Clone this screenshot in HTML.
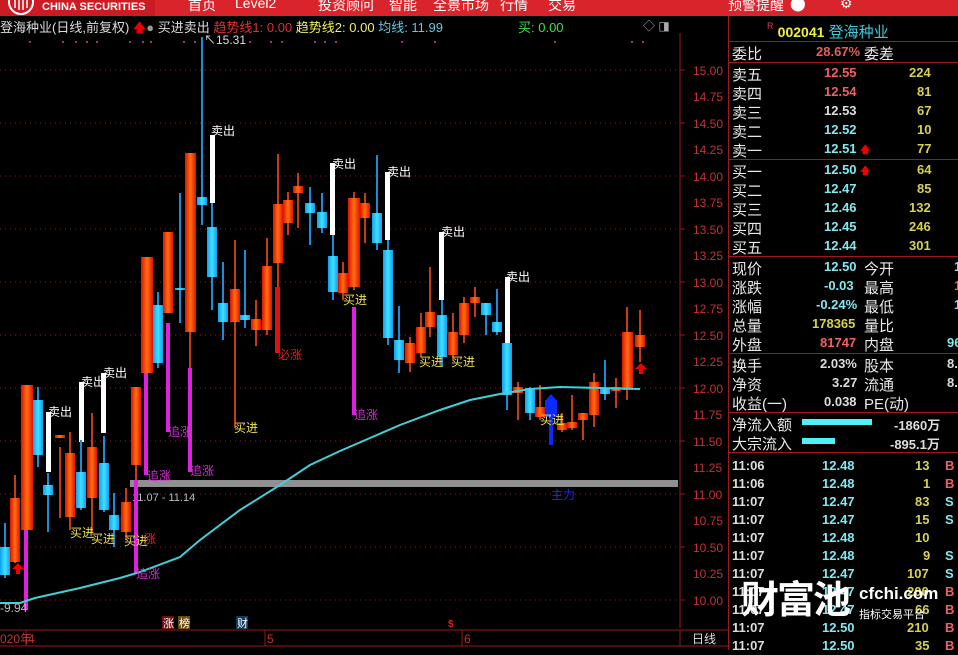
<!DOCTYPE html>
<html><head><meta charset="utf-8"><style>
*{margin:0;padding:0;box-sizing:border-box}
body{width:958px;height:650px;background:#000;overflow:hidden;position:relative;font-family:"Liberation Sans","Noto Sans CJK SC",sans-serif;color:#ddd}
.top{position:absolute;left:0;top:0;width:958px;height:16px;background:#d8242a;overflow:hidden}
.top .lg{position:absolute;left:0;top:0;width:155px;height:16px;background:#cc1b22}
.top span{position:absolute;top:-5px;color:#fff;font-size:14px}
.hd{position:absolute;top:17px;left:0;font-size:13px;white-space:nowrap}
.rp{position:absolute;left:728px;top:16px;width:230px;height:634px;border-left:1px solid #a01818}
.row{position:absolute;left:3px;width:230px;height:19px;font-size:15px;color:#e8e8e8;white-space:nowrap}
.row b{position:absolute;font-weight:bold;font-size:13px;top:1px}
.hl{position:absolute;left:0;width:230px;height:1px;background:#a01818}
.ar{color:#e00;font-size:10px}
</style></head><body>
<div class="top"><div class="lg"></div>
<svg style="position:absolute;left:8px;top:-6px" width="26" height="22"><circle cx="13" cy="8" r="12" fill="none" stroke="#fff" stroke-width="2"/><path d="M7 0V14M11 0V16M15 0V16M19 0V14" stroke="#fff" stroke-width="1.5"/></svg>
<span style="left:42px;top:1px;font-size:11px;font-weight:bold">CHINA SECURITIES</span>
<span style="left:188px">首页</span><span style="left:235px">Level2</span><span style="left:318px">投资顾问</span><span style="left:389px">智能</span><span style="left:433px">全景市场</span><span style="left:500px">行情</span><span style="left:548px">交易</span><span style="left:728px">预警提醒</span><span style="left:790px">⬤</span><span style="left:840px">⚙</span></div>
<div class="hd"><span style="color:#ddd">登海种业(日线,前复权)</span> <span style="color:#e00">🡅</span><span style="color:#999">●</span> <span style="color:#ddd">买进卖出</span> <span style="color:#e03030">趋势线1: 0.00</span> <span style="color:#f0f060">趋势线2: 0.00</span> <span style="color:#60c8e0">均线: 11.99</span></div>
<div class="hd" style="left:518px;color:#40e040">买: 0.00</div>
<div class="hd" style="left:643px;color:#aaa;font-size:12px">◇ ◨</div>
<svg style="position:absolute;left:0;top:0" width="728" height="650">
<defs>
<linearGradient id="r" x1="0" x2="1"><stop offset="0" stop-color="#e01000"/><stop offset=".5" stop-color="#ff7010"/><stop offset="1" stop-color="#e01000"/></linearGradient>
<linearGradient id="b" x1="0" x2="1"><stop offset="0" stop-color="#10a0f0"/><stop offset=".5" stop-color="#40e0ff"/><stop offset="1" stop-color="#10a0f0"/></linearGradient>
</defs>
<g stroke="#a01818" stroke-dasharray="1 4" stroke-width="1">
<line x1="0" y1="70" x2="678" y2="70"/><line x1="0" y1="123" x2="678" y2="123"/><line x1="0" y1="176" x2="678" y2="176"/><line x1="0" y1="229" x2="678" y2="229"/><line x1="0" y1="282" x2="678" y2="282"/><line x1="0" y1="335" x2="678" y2="335"/><line x1="0" y1="388" x2="678" y2="388"/><line x1="0" y1="441" x2="678" y2="441"/><line x1="0" y1="494" x2="678" y2="494"/><line x1="0" y1="547" x2="678" y2="547"/><line x1="0" y1="600" x2="678" y2="600"/>
</g>
<g fill="#a0308a"><rect x="29" y="41" width="2" height="2"/><rect x="62" y="41" width="2" height="2"/><rect x="75" y="41" width="2" height="2"/><rect x="86" y="41" width="2" height="2"/><rect x="96" y="41" width="2" height="2"/><rect x="129" y="41" width="2" height="2"/><rect x="142" y="41" width="2" height="2"/><rect x="150" y="41" width="2" height="2"/><rect x="183" y="41" width="2" height="2"/><rect x="194" y="41" width="2" height="2"/><rect x="249" y="41" width="2" height="2"/><rect x="270" y="41" width="2" height="2"/><rect x="281" y="41" width="2" height="2"/><rect x="314" y="41" width="2" height="2"/><rect x="324" y="41" width="2" height="2"/><rect x="335" y="41" width="2" height="2"/><rect x="401" y="41" width="2" height="2"/><rect x="434" y="41" width="2" height="2"/><rect x="554" y="41" width="2" height="2"/><rect x="631" y="41" width="2" height="2"/><rect x="642" y="41" width="2" height="2"/></g>
<line x1="680" y1="33" x2="680" y2="628" stroke="#a01818"/>
<g stroke="#a01818"><line x1="680" y1="70" x2="685" y2="70"/><line x1="680" y1="123" x2="685" y2="123"/><line x1="680" y1="176" x2="685" y2="176"/><line x1="680" y1="229" x2="685" y2="229"/><line x1="680" y1="282" x2="685" y2="282"/><line x1="680" y1="335" x2="685" y2="335"/><line x1="680" y1="388" x2="685" y2="388"/><line x1="680" y1="441" x2="685" y2="441"/><line x1="680" y1="494" x2="685" y2="494"/><line x1="680" y1="547" x2="685" y2="547"/><line x1="680" y1="600" x2="685" y2="600"/></g>
<g fill="#c83030" font-size="12" font-family="Liberation Sans">
<text x="693" y="75">15.00</text><text x="693" y="101">14.75</text><text x="693" y="128">14.50</text><text x="693" y="154">14.25</text><text x="693" y="181">14.00</text><text x="693" y="207">13.75</text><text x="693" y="234">13.50</text><text x="693" y="260">13.25</text><text x="693" y="287">13.00</text><text x="693" y="313">12.75</text><text x="693" y="340">12.50</text><text x="693" y="366">12.25</text><text x="693" y="393">12.00</text><text x="693" y="419">11.75</text><text x="693" y="446">11.50</text><text x="693" y="472">11.25</text><text x="693" y="499">11.00</text><text x="693" y="525">10.75</text><text x="693" y="552">10.50</text><text x="693" y="578">10.25</text><text x="693" y="605">10.00</text></g>
<rect x="130" y="480" width="548" height="7" fill="#909090"/>
<text x="132" y="501" fill="#bbb" font-size="11">11.07 - 11.14</text>
<g fill="#e020e0"><rect x="24" y="530" width="4" height="80"/><rect x="134" y="480" width="4" height="93"/><rect x="144" y="373" width="4" height="102"/><rect x="166" y="323" width="4" height="109"/><rect x="188" y="368" width="4" height="104"/><rect x="352" y="307" width="4" height="108"/></g>
<g fill="#fff"><rect x="46" y="412" width="5" height="60"/><rect x="79" y="382" width="5" height="60"/><rect x="101" y="373" width="5" height="60"/><rect x="210" y="135" width="5" height="68"/><rect x="330" y="163" width="5" height="72"/><rect x="385" y="172" width="5" height="68"/><rect x="439" y="232" width="5" height="68"/><rect x="505" y="277" width="5" height="66"/></g>
<g stroke-width="2">
<g stroke="#1a8cd8"><line x1="5" y1="523" x2="5" y2="578"/><line x1="38" y1="387" x2="38" y2="467"/><line x1="48" y1="473" x2="48" y2="532"/><line x1="81" y1="440" x2="81" y2="510"/><line x1="104" y1="436" x2="104" y2="512"/><line x1="114" y1="493" x2="114" y2="547"/><line x1="158" y1="292" x2="158" y2="368"/><line x1="180" y1="193" x2="180" y2="323"/><line x1="202" y1="37" x2="202" y2="225"/><line x1="212" y1="203" x2="212" y2="310"/><line x1="223" y1="262" x2="223" y2="340"/><line x1="245" y1="250" x2="245" y2="328"/><line x1="310" y1="187" x2="310" y2="245"/><line x1="322" y1="193" x2="322" y2="233"/><line x1="333" y1="235" x2="333" y2="300"/><line x1="377" y1="155" x2="377" y2="250"/><line x1="388" y1="240" x2="388" y2="345"/><line x1="399" y1="306" x2="399" y2="373"/><line x1="442" y1="300" x2="442" y2="367"/><line x1="486" y1="303" x2="486" y2="335"/><line x1="497" y1="289" x2="497" y2="335"/><line x1="507" y1="343" x2="507" y2="410"/><line x1="530" y1="387" x2="530" y2="420"/><line x1="605" y1="360" x2="605" y2="400"/></g>
<g stroke="#c83a10"><line x1="15" y1="475" x2="15" y2="563"/><line x1="60" y1="447" x2="60" y2="518"/><line x1="70" y1="432" x2="70" y2="530"/><line x1="92" y1="413" x2="92" y2="533"/><line x1="126" y1="488" x2="126" y2="540"/><line x1="136" y1="387" x2="136" y2="480"/><line x1="190" y1="153" x2="190" y2="368"/><line x1="235" y1="240" x2="235" y2="428"/><line x1="256" y1="300" x2="256" y2="346"/><line x1="267" y1="238" x2="267" y2="335"/><line x1="278" y1="154" x2="278" y2="353"/><line x1="288" y1="192" x2="288" y2="235"/><line x1="298" y1="173" x2="298" y2="228"/><line x1="343" y1="262" x2="343" y2="300"/><line x1="354" y1="192" x2="354" y2="290"/><line x1="365" y1="193" x2="365" y2="243"/><line x1="410" y1="337" x2="410" y2="372"/><line x1="421" y1="313" x2="421" y2="357"/><line x1="430" y1="267" x2="430" y2="337"/><line x1="453" y1="313" x2="453" y2="360"/><line x1="464" y1="297" x2="464" y2="343"/><line x1="475" y1="287" x2="475" y2="317"/><line x1="518" y1="382" x2="518" y2="420"/><line x1="540" y1="385" x2="540" y2="420"/><line x1="562" y1="413" x2="562" y2="432"/><line x1="572" y1="395" x2="572" y2="430"/><line x1="583" y1="413" x2="583" y2="440"/><line x1="594" y1="373" x2="594" y2="427"/><line x1="616" y1="378" x2="616" y2="408"/><line x1="627" y1="307" x2="627" y2="400"/><line x1="640" y1="310" x2="640" y2="362"/></g>
</g>
<g fill="url(#b)">
<rect x="0" y="547" width="10" height="28"/><rect x="33" y="400" width="10" height="55"/><rect x="43" y="485" width="10" height="10"/><rect x="76" y="472" width="10" height="36"/><rect x="99" y="463" width="10" height="47"/><rect x="109" y="515" width="10" height="15"/><rect x="153" y="305" width="10" height="58"/><rect x="175" y="288" width="10" height="2"/><rect x="197" y="197" width="10" height="8"/><rect x="207" y="227" width="10" height="50"/><rect x="218" y="303" width="10" height="19"/><rect x="240" y="315" width="10" height="5"/><rect x="305" y="203" width="10" height="10"/><rect x="317" y="212" width="10" height="16"/><rect x="328" y="256" width="10" height="36"/><rect x="372" y="213" width="10" height="30"/><rect x="383" y="250" width="10" height="88"/><rect x="394" y="340" width="10" height="20"/><rect x="437" y="315" width="10" height="42"/><rect x="481" y="303" width="10" height="12"/><rect x="492" y="322" width="10" height="10"/><rect x="502" y="343" width="10" height="52"/><rect x="525" y="388" width="10" height="25"/><rect x="600" y="388" width="10" height="6"/>
</g>
<g fill="url(#r)">
<rect x="10" y="498" width="10" height="64"/><rect x="21" y="385" width="12" height="145"/><rect x="55" y="435" width="10" height="3"/><rect x="65" y="453" width="10" height="64"/><rect x="87" y="447" width="10" height="51"/><rect x="121" y="502" width="10" height="30"/><rect x="131" y="387" width="10" height="78"/><rect x="141" y="257" width="12" height="116"/><rect x="163" y="232" width="10" height="81"/><rect x="185" y="153" width="11" height="179"/><rect x="230" y="289" width="10" height="33"/><rect x="251" y="319" width="10" height="11"/><rect x="262" y="266" width="10" height="64"/><rect x="273" y="204" width="10" height="59"/><rect x="283" y="200" width="10" height="23"/><rect x="293" y="186" width="10" height="7"/><rect x="338" y="273" width="10" height="20"/><rect x="348" y="198" width="12" height="89"/><rect x="360" y="203" width="10" height="15"/><rect x="405" y="343" width="10" height="20"/><rect x="416" y="327" width="10" height="26"/><rect x="425" y="312" width="10" height="15"/><rect x="448" y="332" width="10" height="23"/><rect x="459" y="303" width="10" height="32"/><rect x="470" y="297" width="10" height="6"/><rect x="513" y="387" width="10" height="6"/><rect x="535" y="407" width="10" height="10"/><rect x="557" y="423" width="10" height="7"/><rect x="567" y="422" width="10" height="6"/><rect x="578" y="413" width="10" height="7"/><rect x="589" y="382" width="10" height="33"/><rect x="611" y="387" width="10" height="4"/><rect x="622" y="332" width="11" height="58"/><rect x="635" y="335" width="10" height="12"/>
</g>
<rect x="275" y="287" width="5" height="66" fill="#e01010"/>
<rect x="545" y="400" width="12" height="17" fill="#0a2aff"/><rect x="549" y="417" width="4" height="28" fill="#0a2aff"/><path d="M551 394l6 7h-12z" fill="#0a2aff"/>
<path d="M641 363l6 6h-4v5h-4v-5h-4z" fill="#e00"/><path d="M18 563l6 6h-4v5h-4v-5h-4z" fill="#e00"/>
<polyline fill="none" stroke="#40d0d8" stroke-width="2" points="0,603 20,603 35,598 80,588 120,578 140,572 180,557 200,540 240,510 280,485 310,465 340,451 370,438 400,425 440,410 470,400 500,394 530,389 560,387 600,388 640,389"/>
<g font-size="12" font-family="Liberation Sans,Noto Sans CJK SC,sans-serif">
<g fill="#fff"><text x="48" y="416">卖出</text><text x="81" y="386">卖出</text><text x="103" y="377">卖出</text><text x="211" y="135">卖出</text><text x="332" y="168">卖出</text><text x="387" y="176">卖出</text><text x="441" y="236">卖出</text><text x="506" y="281">卖出</text></g>
<g fill="#f0e050"><text x="70" y="537">买进</text><text x="91" y="543">买进</text><text x="124" y="545">买进</text><text x="234" y="432">买进</text><text x="343" y="304">买进</text><text x="419" y="366">买进</text><text x="451" y="366">买进</text><text x="540" y="424">买进</text></g>
<g fill="#d030d0"><text x="147" y="480">追涨</text><text x="168" y="436">追涨</text><text x="190" y="475">追涨</text><text x="136" y="578">追涨</text><text x="354" y="419">追涨</text></g>
<g fill="#e02020"><text x="278" y="359">必涨</text><text x="144" y="543">涨</text></g>
<text x="551" y="499" fill="#1a2aff">主力</text>
<text x="0" y="612" fill="#bbb">-9.94</text>
<text x="204" y="44" fill="#ddd">↖15.31</text>
</g>
<rect x="162" y="616" width="12" height="13" fill="#6a1010"/><text x="163" y="627" fill="#fff" font-size="11">涨</text>
<rect x="178" y="616" width="12" height="13" fill="#6a4a10"/><text x="179" y="627" fill="#fff" font-size="11">榜</text>
<rect x="236" y="616" width="12" height="13" fill="#103a5a"/><text x="237" y="627" fill="#fff" font-size="11">财</text>
<text x="448" y="627" fill="#e02020" font-size="10" font-weight="bold">$</text>
<line x1="0" y1="630" x2="728" y2="630" stroke="#a01818"/><line x1="0" y1="646" x2="728" y2="646" stroke="#a01818"/>
<line x1="26" y1="630" x2="26" y2="646" stroke="#a01818"/><line x1="265" y1="630" x2="265" y2="646" stroke="#a01818"/><line x1="462" y1="630" x2="462" y2="646" stroke="#a01818"/><line x1="680" y1="630" x2="680" y2="646" stroke="#a01818"/>
<g fill="#c83030" font-size="12"><text x="0" y="643">020年</text><text x="28" y="643">4</text><text x="267" y="643">5</text><text x="464" y="643">6</text></g>
<text x="692" y="643" fill="#ddd" font-size="12">日线</text>
</svg>
<div class="rp">
<div style="position:absolute;left:38px;top:5px;font-size:15px;white-space:nowrap"><span style="color:#e04040;font-size:9px;vertical-align:top">R</span> <b style="color:#f0f040;font-size:14px">002041</b> <span style="color:#40c8e0">登海种业</span></div>
<div class="hl" style="top:25px"></div>
<div class="row" style="top:27px">委比<b style="left:84px;color:#e06060">28.67%</b><span style="position:absolute;left:132px">委差</span></div>
<div class="hl" style="top:46px"></div>
<div class="row" style="top:48px">卖五<b style="left:92px;color:#f06060">12.55</b><b style="left:177px;color:#d8d050">224</b></div>
<div class="row" style="top:67px">卖四<b style="left:92px;color:#f06060">12.54</b><b style="left:185px;color:#d8d050">81</b></div>
<div class="row" style="top:86px">卖三<b style="left:92px;color:#ddd">12.53</b><b style="left:185px;color:#d8d050">67</b></div>
<div class="row" style="top:105px">卖二<b style="left:92px;color:#80e8f0">12.52</b><b style="left:185px;color:#d8d050">10</b></div>
<div class="row" style="top:124px">卖一<b style="left:92px;color:#80e8f0">12.51 <span class="ar">🡅</span></b><b style="left:185px;color:#d8d050">77</b></div>
<div class="hl" style="top:143px"></div>
<div class="row" style="top:145px">买一<b style="left:92px;color:#80e8f0">12.50 <span class="ar">🡅</span></b><b style="left:185px;color:#d8d050">64</b></div>
<div class="row" style="top:164px">买二<b style="left:92px;color:#80e8f0">12.47</b><b style="left:185px;color:#d8d050">85</b></div>
<div class="row" style="top:183px">买三<b style="left:92px;color:#80e8f0">12.46</b><b style="left:177px;color:#d8d050">132</b></div>
<div class="row" style="top:202px">买四<b style="left:92px;color:#80e8f0">12.45</b><b style="left:177px;color:#d8d050">246</b></div>
<div class="row" style="top:221px">买五<b style="left:92px;color:#80e8f0">12.44</b><b style="left:177px;color:#d8d050">301</b></div>
<div class="hl" style="top:240px"></div>
<div class="row" style="top:242px">现价<b style="left:92px;color:#80e8f0">12.50</b><span style="position:absolute;left:132px">今开</span><b style="left:222px;color:#80e8f0">1</b></div>
<div class="row" style="top:261px">涨跌<b style="left:92px;color:#80e8f0">-0.03</b><span style="position:absolute;left:132px">最高</span><b style="left:222px;color:#f06060">1</b></div>
<div class="row" style="top:280px">涨幅<b style="left:84px;color:#80e8f0">-0.24%</b><span style="position:absolute;left:132px">最低</span><b style="left:222px;color:#80e8f0">1</b></div>
<div class="row" style="top:299px">总量<b style="left:80px;color:#d8d050">178365</b><span style="position:absolute;left:132px">量比</span></div>
<div class="row" style="top:318px">外盘<b style="left:88px;color:#f06060">81747</b><span style="position:absolute;left:132px">内盘</span><b style="left:215px;color:#80e8f0">96</b></div>
<div class="hl" style="top:337px"></div>
<div class="row" style="top:339px">换手<b style="left:88px;color:#ddd">2.03%</b><span style="position:absolute;left:132px">股本</span><b style="left:215px;color:#ddd">8.8</b></div>
<div class="row" style="top:358px">净资<b style="left:100px;color:#ddd">3.27</b><span style="position:absolute;left:132px">流通</span><b style="left:215px;color:#ddd">8.8</b></div>
<div class="row" style="top:377px">收益(一)<b style="left:92px;color:#ddd">0.038</b><span style="position:absolute;left:132px">PE(动)</span></div>
<div class="hl" style="top:396px"></div>
<div class="row" style="top:398px">净流入额<span style="position:absolute;left:70px;top:5px;width:70px;height:6px;background:#50f0f8"></span><b style="left:162px;color:#ddd">-1860万</b></div>
<div class="row" style="top:417px">大宗流入<span style="position:absolute;left:70px;top:5px;width:33px;height:6px;background:#50f0f8"></span><b style="left:158px;color:#ddd">-895.1万</b></div>
<div class="hl" style="top:436px"></div>
<div style="position:absolute;left:3px;top:441px;font-size:13px;font-weight:bold;line-height:18px;width:225px">
<div style="position:relative;height:18px"><span style="color:#ddd">11:06</span><span style="position:absolute;left:90px;color:#80e8f0">12.48</span><span style="position:absolute;left:183px;color:#d8d050">13</span><span style="position:absolute;left:213px;color:#f06060">B</span></div>
<div style="position:relative;height:18px"><span style="color:#ddd">11:06</span><span style="position:absolute;left:90px;color:#80e8f0">12.48</span><span style="position:absolute;left:191px;color:#d8d050">1</span><span style="position:absolute;left:213px;color:#f06060">B</span></div>
<div style="position:relative;height:18px"><span style="color:#ddd">11:07</span><span style="position:absolute;left:90px;color:#80e8f0">12.47</span><span style="position:absolute;left:183px;color:#d8d050">83</span><span style="position:absolute;left:213px;color:#80e8f0">S</span></div>
<div style="position:relative;height:18px"><span style="color:#ddd">11:07</span><span style="position:absolute;left:90px;color:#80e8f0">12.47</span><span style="position:absolute;left:183px;color:#d8d050">15</span><span style="position:absolute;left:213px;color:#80e8f0">S</span></div>
<div style="position:relative;height:18px"><span style="color:#ddd">11:07</span><span style="position:absolute;left:90px;color:#80e8f0">12.48</span><span style="position:absolute;left:183px;color:#d8d050">10</span></div>
<div style="position:relative;height:18px"><span style="color:#ddd">11:07</span><span style="position:absolute;left:90px;color:#80e8f0">12.48</span><span style="position:absolute;left:191px;color:#d8d050">9</span><span style="position:absolute;left:213px;color:#80e8f0">S</span></div>
<div style="position:relative;height:18px"><span style="color:#ddd">11:07</span><span style="position:absolute;left:90px;color:#80e8f0">12.47</span><span style="position:absolute;left:175px;color:#d8d050">107</span><span style="position:absolute;left:213px;color:#80e8f0">S</span></div>
<div style="position:relative;height:18px"><span style="color:#ddd">11:07</span><span style="position:absolute;left:90px;color:#80e8f0">12.47</span><span style="position:absolute;left:175px;color:#d8d050">200</span><span style="position:absolute;left:213px;color:#f06060">B</span></div>
<div style="position:relative;height:18px"><span style="color:#ddd">11:07</span><span style="position:absolute;left:90px;color:#80e8f0">12.47</span><span style="position:absolute;left:183px;color:#d8d050">66</span><span style="position:absolute;left:213px;color:#f06060">B</span></div>
<div style="position:relative;height:18px"><span style="color:#ddd">11:07</span><span style="position:absolute;left:90px;color:#80e8f0">12.50</span><span style="position:absolute;left:175px;color:#d8d050">210</span><span style="position:absolute;left:213px;color:#f06060">B</span></div>
<div style="position:relative;height:18px"><span style="color:#ddd">11:07</span><span style="position:absolute;left:90px;color:#80e8f0">12.50</span><span style="position:absolute;left:183px;color:#d8d050">35</span><span style="position:absolute;left:213px;color:#f06060">B</span></div>
</div>
<div style="position:absolute;left:12px;top:565px;font-size:38px;font-weight:bold;color:#fff;letter-spacing:-2px;line-height:40px">财富池</div>
<div style="position:absolute;left:130px;top:568px;font-size:17px;font-weight:bold;color:#fff">cfchi.com</div>
<div style="position:absolute;left:130px;top:590px;font-size:11px;color:#fff">指标交易平台</div>
</div>
</body></html>
